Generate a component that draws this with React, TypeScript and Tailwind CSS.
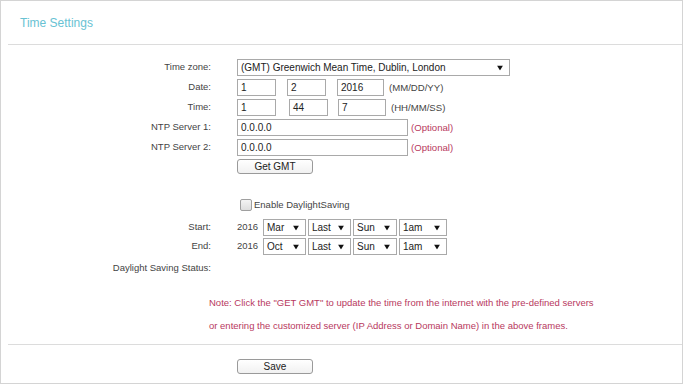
import React from "react";

const font = { fontFamily: '"Liberation Sans", Arial, sans-serif' };

const Arrow = () => (
  <svg
    className="absolute right-[6px] top-1/2 -translate-y-1/2 pointer-events-none"
    width="6"
    height="5"
    viewBox="0 0 6 5"
  >
    <path d="M0 0h6L3 5z" fill="#111" />
  </svg>
);

const FakeSelect = ({ value, className }: { value: string; className: string }) => (
  <div
    className={`relative h-[17px] border border-[#a9a9a9] bg-white flex items-center pl-[3px] text-[10px] text-[#222] ${className}`}
  >
    {value}
    <Arrow />
  </div>
);

const Field = ({ value, className }: { value: string; className: string }) => (
  <div
    className={`h-[17px] border border-[#a9a9a9] bg-white flex items-center pl-[3px] text-[10px] text-[#222] ${className}`}
  >
    {value}
  </div>
);

const Label = ({ children }: { children?: React.ReactNode }) => (
  <div className="w-[210px] h-[17px] shrink-0 flex items-center justify-end text-[9.5px] text-[#444]">
    {children}
  </div>
);

const Hint = ({ children, red }: { children: React.ReactNode; red?: boolean }) => (
  <span className={`text-[9.6px] ${red ? "text-[#b8395e]" : "text-[#444]"}`}>{children}</span>
);

const Button = ({ label }: { label: string }) => (
  <button className="block h-[15px] w-[76px] rounded-[3px] border border-[#9a9a9a] bg-gradient-to-b from-white to-[#f1f1f1] text-[10px] text-[#222] leading-none">
    {label}
  </button>
);

const DstRow = ({ label, month }: { label: string; month: string }) => (
  <div className="flex items-center h-[19px]">
    <Label>{label}</Label>
    <div className="ml-[26px] flex items-center">
      <span className="text-[9.5px] text-[#444] w-[26px]">2016</span>
      <div className="flex gap-[2px]">
        <FakeSelect value={month} className="w-[43px]" />
        <FakeSelect value="Last" className="w-[43px]" />
        <FakeSelect value="Sun" className="w-[44px]" />
        <FakeSelect value="1am" className="w-[48px]" />
      </div>
    </div>
  </div>
);

export default function App() {
  return (
    <div
      className="w-[683px] h-[384px] border border-[#d4d4d4] bg-white overflow-hidden text-[10px]"
      style={font}
    >
      <div className="h-[43px] flex items-center pl-[19px] pt-[1px]">
        <span className="text-[12px] text-[#68c2d3]">Time Settings</span>
      </div>
      <div className="ml-[7px] h-[1px] bg-[#dcdcdc]" />

      <div className="pt-[14px]">
        <div className="flex items-start h-[20px]">
          <Label>Time zone:</Label>
          <FakeSelect
            value="(GMT) Greenwich Mean Time, Dublin, London"
            className="ml-[26px] w-[273px]"
          />
        </div>
        <div className="flex items-start h-[20px]">
          <Label>Date:</Label>
          <div className="ml-[26px] flex items-center">
            <Field value="1" className="w-[39px]" />
            <Field value="2" className="w-[39px] ml-[11px]" />
            <Field value="2016" className="w-[47px] ml-[11px]" />
            <span className="ml-[5px]">
              <Hint>(MM/DD/YY)</Hint>
            </span>
          </div>
        </div>
        <div className="flex items-start h-[20px]">
          <Label>Time:</Label>
          <div className="ml-[26px] flex items-center">
            <Field value="1" className="w-[39px]" />
            <Field value="44" className="w-[39px] ml-[13px]" />
            <Field value="7" className="w-[48px] ml-[10px]" />
            <span className="ml-[5px]">
              <Hint>(HH/MM/SS)</Hint>
            </span>
          </div>
        </div>
        <div className="flex items-start h-[20px]">
          <Label>NTP Server 1:</Label>
          <div className="ml-[26px] flex items-center">
            <Field value="0.0.0.0" className="w-[171px]" />
            <span className="ml-[3px]">
              <Hint red>(Optional)</Hint>
            </span>
          </div>
        </div>
        <div className="flex items-start h-[20px]">
          <Label>NTP Server 2:</Label>
          <div className="ml-[26px] flex items-center">
            <Field value="0.0.0.0" className="w-[171px]" />
            <span className="ml-[3px]">
              <Hint red>(Optional)</Hint>
            </span>
          </div>
        </div>
        <div className="flex items-start h-[20px]">
          <Label />
          <div className="ml-[26px]">
            <Button label="Get GMT" />
          </div>
        </div>

        <div className="flex items-center h-[20px] mt-[16px]">
          <Label />
          <div className="ml-[29px] flex items-center">
            <span className="w-[12px] h-[12px] rounded-[2px] border border-[#9f9f9f] bg-gradient-to-b from-[#f4f4f4] to-[#dedede]" />
            <span className="ml-[2px] text-[9.5px] text-[#444]">Enable DaylightSaving</span>
          </div>
        </div>

        <div className="mt-[3px]">
          <DstRow label="Start:" month="Mar" />
          <DstRow label="End:" month="Oct" />
        </div>

        <div className="flex items-center h-[20px] mt-[2px]">
          <Label>Daylight Saving Status:</Label>
        </div>

        <div className="pl-[208px] mt-[13px] text-[9.5px] text-[#b8395e] leading-[23px]">
          <div>Note: Click the "GET GMT" to update the time from the internet with the pre-defined servers</div>
          <div>or entering the customized server (IP Address or Domain Name) in the above frames.</div>
        </div>
      </div>

      <div className="ml-[7px] mt-[7px] h-[1px] bg-[#dcdcdc]" />
      <div className="pl-[236px] pt-[14px]">
        <Button label="Save" />
      </div>
    </div>
  );
}
